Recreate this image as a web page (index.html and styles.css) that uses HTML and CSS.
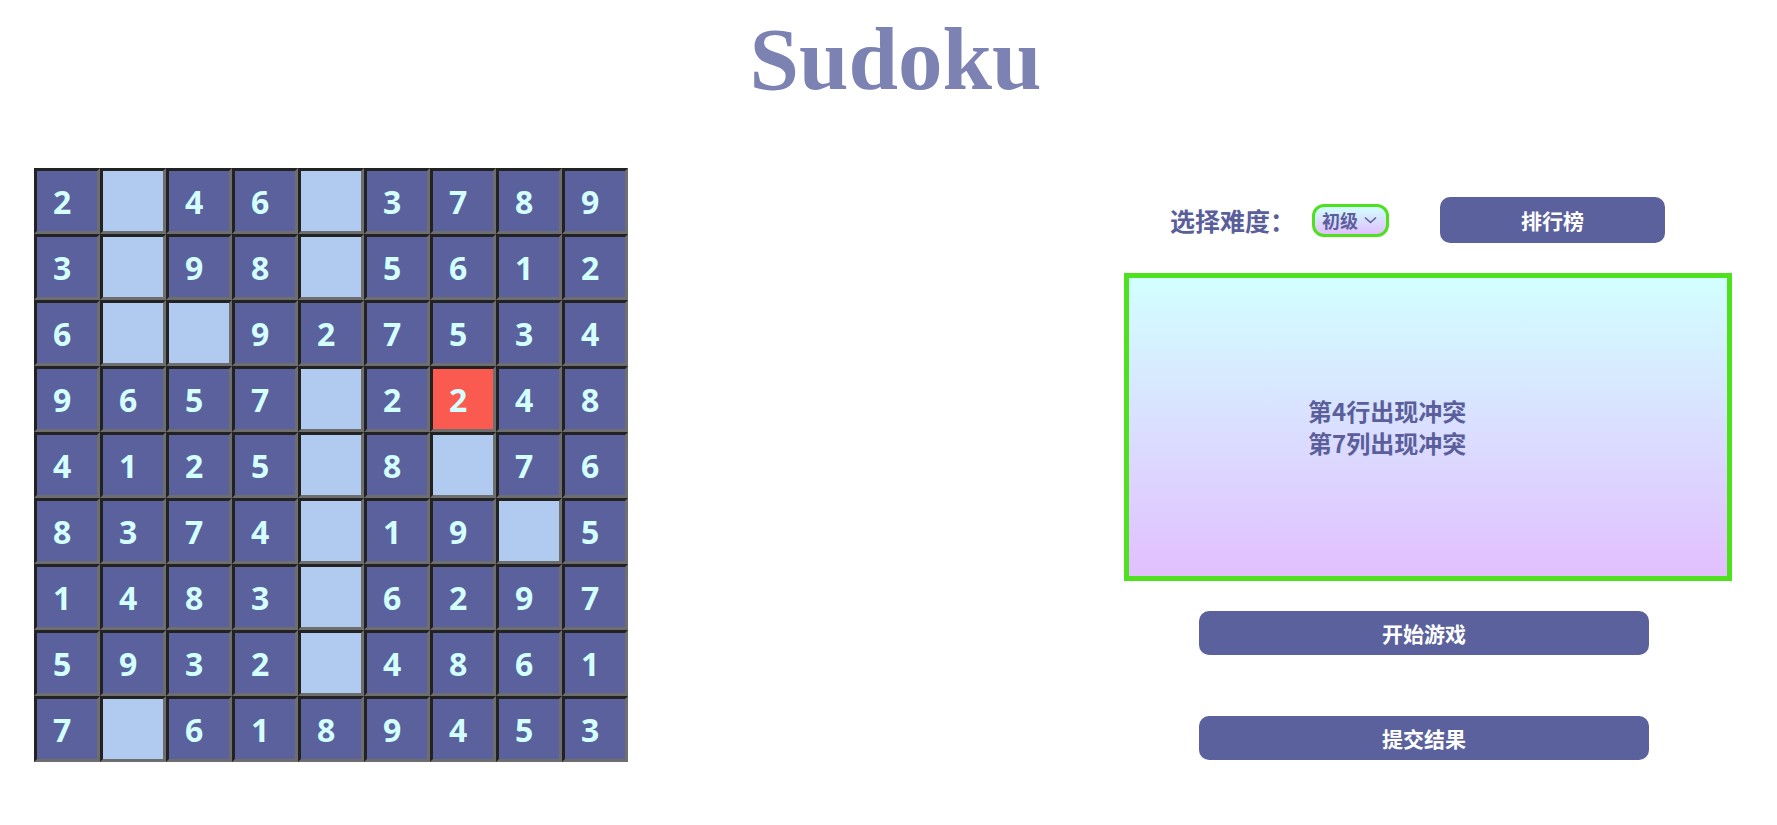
FILE: index.html
```html
<!DOCTYPE html>
<html lang="zh">
<head>
<meta charset="utf-8">
<title>Sudoku</title>
<link rel="stylesheet" href="styles.css">
</head>
<body>
<h1 class="title">Sudoku</h1>
<main class="layout">
  <div class="board">
    <div class="cell">2</div><div class="cell empty"></div><div class="cell">4</div><div class="cell">6</div><div class="cell empty"></div><div class="cell">3</div><div class="cell">7</div><div class="cell">8</div><div class="cell">9</div>
    <div class="cell">3</div><div class="cell empty"></div><div class="cell">9</div><div class="cell">8</div><div class="cell empty"></div><div class="cell">5</div><div class="cell">6</div><div class="cell">1</div><div class="cell">2</div>
    <div class="cell">6</div><div class="cell empty"></div><div class="cell empty"></div><div class="cell">9</div><div class="cell">2</div><div class="cell">7</div><div class="cell">5</div><div class="cell">3</div><div class="cell">4</div>
    <div class="cell">9</div><div class="cell">6</div><div class="cell">5</div><div class="cell">7</div><div class="cell empty"></div><div class="cell">2</div><div class="cell conflict">2</div><div class="cell">4</div><div class="cell">8</div>
    <div class="cell">4</div><div class="cell">1</div><div class="cell">2</div><div class="cell">5</div><div class="cell empty"></div><div class="cell">8</div><div class="cell empty"></div><div class="cell">7</div><div class="cell">6</div>
    <div class="cell">8</div><div class="cell">3</div><div class="cell">7</div><div class="cell">4</div><div class="cell empty"></div><div class="cell">1</div><div class="cell">9</div><div class="cell empty"></div><div class="cell">5</div>
    <div class="cell">1</div><div class="cell">4</div><div class="cell">8</div><div class="cell">3</div><div class="cell empty"></div><div class="cell">6</div><div class="cell">2</div><div class="cell">9</div><div class="cell">7</div>
    <div class="cell">5</div><div class="cell">9</div><div class="cell">3</div><div class="cell">2</div><div class="cell empty"></div><div class="cell">4</div><div class="cell">8</div><div class="cell">6</div><div class="cell">1</div>
    <div class="cell">7</div><div class="cell empty"></div><div class="cell">6</div><div class="cell">1</div><div class="cell">8</div><div class="cell">9</div><div class="cell">4</div><div class="cell">5</div><div class="cell">3</div>
  </div>
  <section class="panel">
    <div class="controls">
      <span class="label">选择难度：</span>
      <div class="select">
        <span>初级</span>
        <svg class="chevron" width="13" height="8" viewBox="0 0 13 8"><path d="M1 1.5 L6.5 6.5 L12 1.5" fill="none" stroke="#5a5f9c" stroke-width="1.6"/></svg>
      </div>
      <button class="btn rank-btn">排行榜</button>
    </div>
    <div class="message">
      <div class="message-text">第4行出现冲突<br>第7列出现冲突</div>
    </div>
    <button class="btn action start">开始游戏</button>
    <button class="btn action submit">提交结果</button>
  </section>
</main>
</body>
</html>
```

FILE: styles.css
```css
html, body {
  margin: 0;
  padding: 0;
  background: #ffffff;
}

body {
  font-family: "Noto Sans CJK SC", "Noto Sans", sans-serif;
}

.title {
  margin: 8px 0 0;
  padding-left: 14px;
  text-align: center;
  font-family: "Liberation Serif", "Times New Roman", serif;
  font-weight: bold;
  font-size: 89px;
  line-height: normal;
  color: #7c83b3;
}

.layout {
  display: flex;
  justify-content: space-between;
  align-items: flex-start;
  margin-top: 58px;
  padding: 0 45px 0 34px;
}

.board {
  display: grid;
  grid-template-columns: repeat(9, 66px);
  grid-auto-rows: 66px;
}

.cell {
  box-sizing: border-box;
  width: 66px;
  height: 66px;
  border: 3px solid;
  border-color: #222222 #6e6e6e #6e6e6e #222222;
  background: #5a619d;
  color: #d4ffff;
  display: flex;
  align-items: center;
  padding-left: 16px;
  font-family: "Open Sans", "Noto Sans", sans-serif;
  font-weight: bold;
  font-size: 32px;
}

.cell.empty {
  background: #b0caf0;
}

.cell.conflict {
  background: #fa5a50;
}

.panel {
  width: 608px;
  display: flex;
  flex-direction: column;
  padding-top: 29px;
}

.controls {
  display: flex;
  align-items: center;
  height: 46px;
  padding-left: 46px;
}

.label {
  font-size: 25px;
  font-weight: bold;
  color: #5a5f9c;
  margin-right: 17px;
}

.select {
  box-sizing: border-box;
  width: 77px;
  height: 33px;
  border: 3px solid #50e11e;
  border-radius: 12px;
  background: linear-gradient(#d2ffff, #e2bfff);
  display: flex;
  align-items: center;
  padding-left: 7px;
  gap: 6px;
  font-size: 18px;
  font-weight: bold;
  color: #5a5f9c;
}

.chevron {
  display: block;
}

.btn {
  border: none;
  background: #5a619d;
  color: #ffffff;
  font-family: "Noto Sans CJK SC", "Noto Sans", sans-serif;
  font-size: 21px;
  font-weight: bold;
  border-radius: 10px;
  padding: 0;
}

.rank-btn {
  margin-left: 51px;
  width: 225px;
  height: 46px;
}

.message {
  box-sizing: border-box;
  margin-top: 30px;
  height: 308px;
  border: 5px solid #50e11e;
  background: linear-gradient(#d2ffff, #e2bfff);
  display: flex;
  align-items: center;
  padding-left: 179px;
  color: #5a5f9c;
}

.message-text {
  font-size: 24px;
  font-weight: bold;
  line-height: 32px;
}

.action {
  align-self: flex-start;
  margin-left: 75px;
  width: 450px;
  height: 44px;
}

.start {
  margin-top: 30px;
}

.submit {
  margin-top: 61px;
}
```
